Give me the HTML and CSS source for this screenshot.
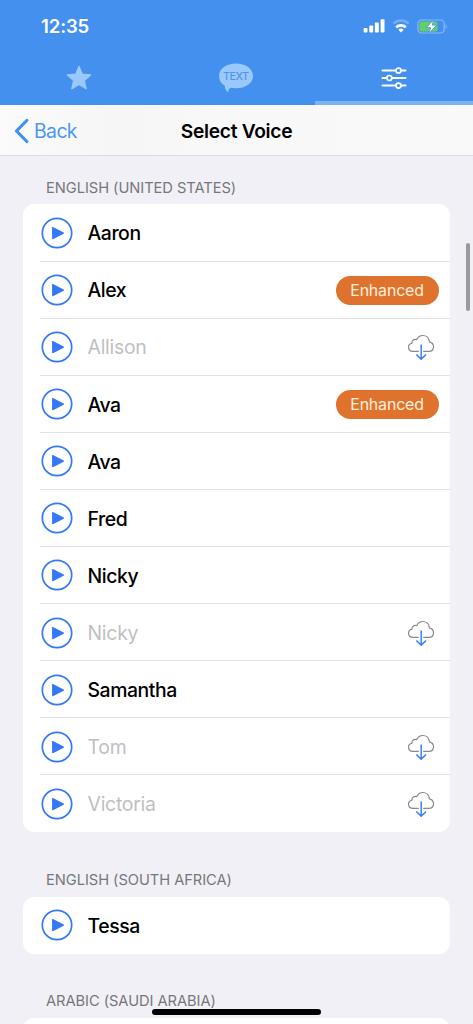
FILE: index.html
```html
<!DOCTYPE html>
<html lang="en">
<head>
<meta charset="utf-8">
<title>Select Voice</title>
<link rel="stylesheet" href="styles.css">
</head>
<body>
<svg class="defs" width="0" height="0" aria-hidden="true">
  <symbol id="play" viewBox="0 0 32 32">
    <circle cx="16" cy="16" r="14.700" fill="none" stroke="#3478f6" stroke-width="1.700"/>
    <path d="M11.700 10.600v11l10.700-5.500z" fill="#3478f6" stroke="#3478f6" stroke-width="1.200" stroke-linejoin="round"/>
  </symbol>
  <symbol id="cloud" viewBox="0 0 28 28">
    <path d="M11.300 18.400H6.200C3.200 18.400 1.500 16.700 1.500 14.300c0-2.100 1.300-3.700 3.400-4.200C4.900 7.500 7.200 5.800 9.800 6.600 11 3.900 13.200 2.500 15.800 2.500c3.500 0 6.300 2.500 6.500 6.300 2.600.5 4.200 2.400 4.200 4.900 0 2.800-1.900 4.700-4.800 4.700h-5" fill="none" stroke="#88888b" stroke-width="1.200" stroke-linecap="round" stroke-linejoin="round"/>
    <path d="M14.200 11.400v14.600M9.300 21.500l4.900 4.600 4.900-4.600" fill="none" stroke="#3d80f6" stroke-width="1.500"/>
  </symbol>
</svg>
<div class="screen">
  <header class="top">
    <div class="status">
      <span class="time">12:35</span>
      <div class="indicators">
        <svg class="signal" width="22" height="14" viewBox="0 0 22 14" fill="#fff"><rect x="0.600" y="9" width="3.900" height="4.600" rx="1"/><rect x="6.300" y="6.600" width="3.900" height="7" rx="1"/><rect x="11.900" y="3.500" width="3.900" height="10.100" rx="1"/><rect x="17.600" y="0.300" width="3.900" height="13.300" rx="1"/></svg>
        <svg class="wifi" width="18" height="14" viewBox="0 0 18 14" fill="none"><path d="M1.400 4.600a10.900 10.900 0 0 1 15.200 0" stroke="#71aef3" stroke-width="2.600"/><path d="M4.200 8.300a6.900 6.900 0 0 1 9.600 0" stroke="#fff" stroke-width="2.600"/><path d="M9 13.500l-2.600-2.700a3.700 3.700 0 0 1 5.200 0z" fill="#fff"/></svg>
        <svg class="battery" width="31" height="15" viewBox="0 0 31 15"><rect x="0.900" y="1" width="26.300" height="13" rx="3.700" fill="none" stroke="#8abaf4" stroke-width="1.200"/><rect x="2.500" y="2.600" width="18" height="9.900" rx="2.200" fill="#65cf67"/><path d="M28.600 5.200v4.600c1.500-.4 1.500-4.200 0-4.600z" fill="#8abaf4"/><path d="M16.700 0.700L9.200 8.700h4.400l-1.800 6 8-8.600h-4.500z" fill="#fff" stroke="#4f9be0" stroke-width="1"/></svg>
      </div>
    </div>
    <nav class="tabs">
      <a class="tab"><svg width="28" height="28" viewBox="0 0 28 28"><path d="M14 2.500l3.200 7.700 8.400.7-6.300 5.500 1.800 8.200L14 20.300l-7.100 4.300 1.800-8.200-6.300-5.500 8.400-.7z" fill="#9bc8fa" stroke="#9bc8fa" stroke-width="1.400" stroke-linejoin="round"/></svg></a>
      <a class="tab"><svg width="36" height="32" viewBox="0 0 36 32"><path d="M18 1.500c9.500 0 17 5.300 17 12.400s-7.500 12.300-17 12.300c-1.800 0-3.500-.1-5.100-.4-2 .7-2.700 2-2.500 4.600-2.200-1.400-3.400-3.500-3.600-6.600C3.200 21.500 1 18 1 13.900 1 6.800 8.500 1.500 18 1.500z" fill="#9bc8fa"/><text class="bubble-text" x="18" y="17.500" text-anchor="middle" textLength="26">TEXT</text></svg></a>
      <a class="tab active"><svg width="28" height="26" viewBox="0 0 28 26" fill="#4390ee" stroke="#fff" stroke-linecap="round"><path d="M2.500 5.500h23M2.500 13h23M2.500 20.600h23" stroke-width="2"/><g stroke-width="1.700"><circle cx="18.500" cy="5.500" r="2.500"/><circle cx="9.300" cy="13" r="2.500"/><circle cx="18.500" cy="20.600" r="2.500"/></g></svg></a>
    </nav>
  </header>
  <div class="navbar">
    <a class="back"><svg width="16" height="26" viewBox="0 0 16 26"><path d="M13.800 2.500L3.500 13l10.300 10.500" fill="none" stroke="#4192f0" stroke-width="3.200" stroke-linecap="round" stroke-linejoin="round"/></svg><span>Back</span></a>
    <h1 class="title">Select Voice</h1>
    <span></span>
  </div>
  <main class="content">
    <h2 class="section us">ENGLISH (UNITED STATES)</h2>
    <ul class="card">
      <li class="row"><svg class="play"><use href="#play"/></svg><div class="cell"><span class="name">Aaron</span></div></li>
      <li class="row"><svg class="play"><use href="#play"/></svg><div class="cell"><span class="name">Alex</span><span class="badge">Enhanced</span></div></li>
      <li class="row off"><svg class="play"><use href="#play"/></svg><div class="cell"><span class="name">Allison</span><svg class="cloud"><use href="#cloud"/></svg></div></li>
      <li class="row"><svg class="play"><use href="#play"/></svg><div class="cell"><span class="name">Ava</span><span class="badge">Enhanced</span></div></li>
      <li class="row"><svg class="play"><use href="#play"/></svg><div class="cell"><span class="name">Ava</span></div></li>
      <li class="row"><svg class="play"><use href="#play"/></svg><div class="cell"><span class="name">Fred</span></div></li>
      <li class="row"><svg class="play"><use href="#play"/></svg><div class="cell"><span class="name">Nicky</span></div></li>
      <li class="row off"><svg class="play"><use href="#play"/></svg><div class="cell"><span class="name">Nicky</span><svg class="cloud"><use href="#cloud"/></svg></div></li>
      <li class="row"><svg class="play"><use href="#play"/></svg><div class="cell"><span class="name">Samantha</span></div></li>
      <li class="row off"><svg class="play"><use href="#play"/></svg><div class="cell"><span class="name">Tom</span><svg class="cloud"><use href="#cloud"/></svg></div></li>
      <li class="row off"><svg class="play"><use href="#play"/></svg><div class="cell"><span class="name">Victoria</span><svg class="cloud"><use href="#cloud"/></svg></div></li>
    </ul>
    <h2 class="section">ENGLISH (SOUTH AFRICA)</h2>
    <ul class="card">
      <li class="row"><svg class="play"><use href="#play"/></svg><div class="cell"><span class="name">Tessa</span></div></li>
    </ul>
    <h2 class="section">ARABIC (SAUDI ARABIA)</h2>
    <ul class="card"><li class="row"></li></ul>
  </main>
  <div class="scrollbar"></div>
  <div class="home"></div>
</div>
</body>
</html>
```
FILE: styles.css
```css
* { box-sizing: border-box; }
body, h1, h2, ul { margin: 0; padding: 0; }
body { font-family: Inter, "Liberation Sans", sans-serif; background: #f1f0f6; }
.defs { position: absolute; }
svg { display: block; flex: none; }
.screen { position: relative; width: 473px; height: 1024px; overflow: hidden; background: #f1f0f6; }
.top { height: 105.400px; background: #4390ee; display: flex; flex-direction: column; }
.status { height: 52px; padding: 0 25px 0 41px; display: flex; justify-content: space-between; align-items: center; }
.time { color: #fff; font-size: 18.500px; font-weight: 600; letter-spacing: -0.100px; line-height: 22px; }
.indicators { display: flex; align-items: center; }
.signal { margin-right: 1px; }
.wifi { margin-left: 6.500px; }
.battery { margin-left: 7px; }
.tabs { flex: 1; display: grid; grid-template-columns: repeat(3, 1fr); }
.tab { display: flex; justify-content: center; align-items: center; padding-top: 3px; border-bottom: 4px solid transparent; }
.tab.active { border-bottom-color: #7ab3f4; }
.bubble-text { font-size: 10.800px; font-weight: 500; fill: #4f97ee; }
.navbar { height: 50.600px; background: linear-gradient(90deg, #fbfbfc, #f6f6f6 25%, #f8f8f8 45%, #f9f9f9); border-bottom: 1px solid #dcdcde; display: grid; grid-template-columns: 1fr auto 1fr; align-items: center; padding-top: 1px; }
.back { display: flex; align-items: center; gap: 5px; padding-left: 13px; color: #4a98f0; font-size: 19.400px; letter-spacing: -0.600px; }
.title { font-size: 19.200px; font-weight: 600; letter-spacing: -0.300px; }
.content { padding: 0 23px; }
.section { height: 64.400px; padding: 0 0 7px 23px; display: flex; align-items: flex-end; font-size: 14.700px; line-height: 19px; font-weight: 400; letter-spacing: -0.060px; color: #77777b; }
.us { height: 48.500px; padding-bottom: 6.300px; }
.card { list-style: none; background: #fff; border-radius: 11.500px; overflow: hidden; }
.row { height: 57.080px; padding-left: 17px; display: flex; align-items: center; font-size: 19.400px; font-weight: 500; letter-spacing: -0.430px; color: #000; }
.row:not(:last-child) { background: linear-gradient(#e2e2e5, #e2e2e5) 17px 100% / 100% 1px no-repeat; }
.play { width: 34px; height: 32px; }
.cell { flex: 1; display: flex; align-items: center; justify-content: space-between; padding: 0 11.500px 0 13.500px; }
.name { padding-top: 0.600px; }
.off { color: #bfbfc1; font-weight: 400; letter-spacing: -0.250px; }
.badge { width: 103px; height: 29px; border-radius: 15px; background: #df732d; color: #fff0df; font-size: 15.900px; font-weight: 400; letter-spacing: -0.150px; line-height: 29px; text-align: center; }
.cloud { width: 28px; height: 28px; margin-right: 4px; }
.scrollbar { position: absolute; left: 465.500px; top: 243px; width: 4px; height: 68px; border-radius: 2px; background: #9a9a9d; }
.home { position: absolute; left: 152px; top: 1008.500px; width: 169px; height: 6px; border-radius: 3px; background: #000; }
```
